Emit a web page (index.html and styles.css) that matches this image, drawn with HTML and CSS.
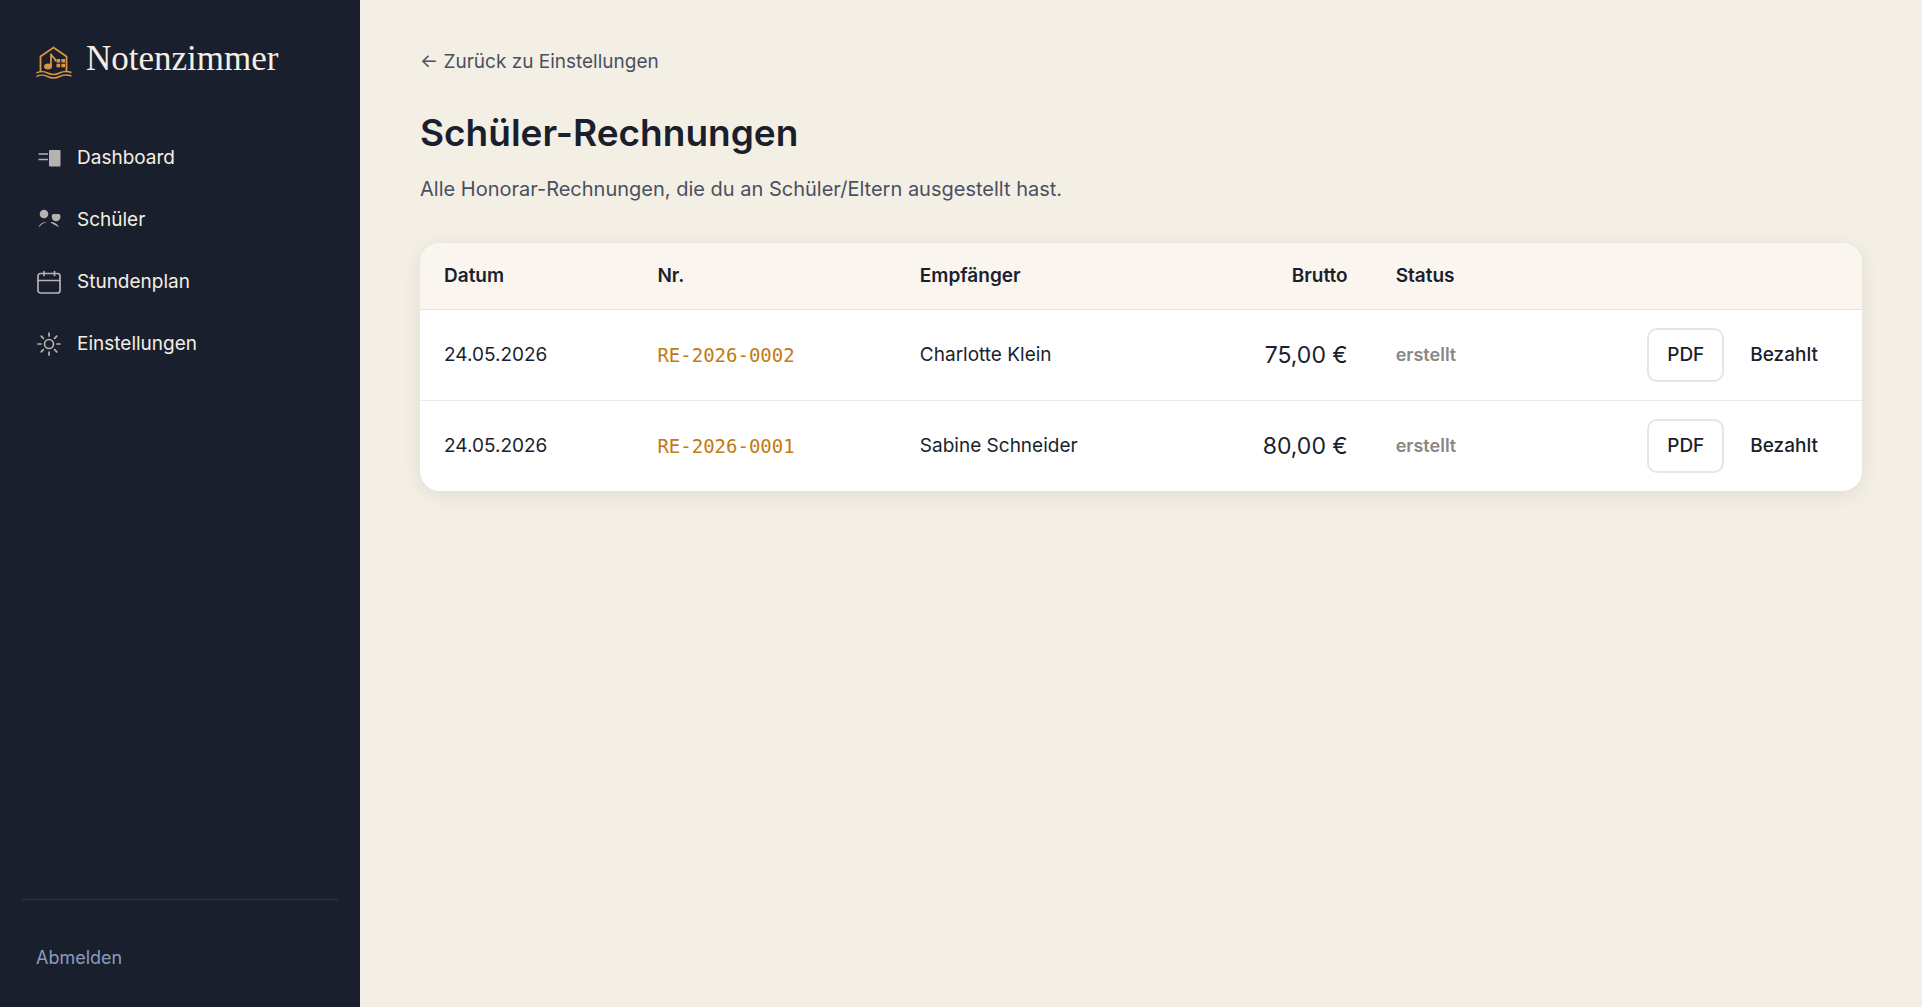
FILE: index.html
```html
<!DOCTYPE html>
<html lang="de">
  <head>
    <meta charset="UTF-8" />
    <meta name="viewport" content="width=device-width, initial-scale=1.0" />
    <title>Schüler-Rechnungen – Notenzimmer</title>
    <link rel="stylesheet" href="styles.css">
  </head>
  <body>
    <div class="app">
      <aside class="sidebar">
        <a class="brand" href="#">
          <svg class="brand-logo" viewBox="0 0 36 36" fill="none" stroke="currentColor" stroke-width="1.8">
            <path d="M4.5 28V12.5L17.5 3.5l13 9V28" />
            <path d="M.5 29c4-2 7-2 11 0s8 2 12 0 8-2 12-.5" stroke-width="1.4" />
            <path d="M.5 32.5c4-2 7-2 11 0s8 2 12 0 8-2 12-.5" stroke-width="1.4" />
            <path d="M15 22.5V9.500c0 4 4.500 3 4.500 8" />
            <ellipse cx="12" cy="22.5" rx="4" ry="3" fill="currentColor" stroke="none" />
            <path d="M20.5 15h3.7v3.5h-3.7zM25.4 15H29v3.5h-3.6zM20.5 19.7h3.7v3.5h-3.7zM25.4 19.7H29v3.5h-3.6z" fill="currentColor" stroke="none" />
          </svg>
          <span class="brand-name">Notenzimmer</span>
        </a>
        <nav class="nav">
          <a class="nav-link" href="#">
            <svg class="icon" viewBox="0 0 24 24" fill="none" stroke="currentColor" stroke-width="1.3">
              <path d="M1.5 8H11M1.5 13.5H11" />
              <rect x="12" y="4" width="11.5" height="16.5" rx="1" fill="currentColor" stroke="none" />
            </svg>
            Dashboard
          </a>
          <a class="nav-link" href="#">
            <svg class="icon" viewBox="0 0 24 24" fill="currentColor">
              <circle cx="7" cy="6" r="4.3" />
              <path d="M14.7 8.5c0-3 2.5-2.8 4.300-2.300 1.800-.5 4.500-.7 4.500 2.300 0 3-2 4.800-4.400 4.800s-4.400-1.800-4.400-4.800z" />
              <path d="M1.5 19.5c.5-3 4-5.800 8.500-5.500-3.500 1-6 2.500-8.500 5.500zM22 19.5c-1-3-4-5.500-8.500-5.500 1 2 5 2.500 8.500 5.500z" />
            </svg>
            Schüler
          </a>
          <a class="nav-link" href="#">
            <svg class="icon" viewBox="0 0 24 24" fill="none" stroke="currentColor" stroke-width="1.7" stroke-linecap="round">
              <rect x="1" y="3.5" width="22" height="19.5" rx="2.5" />
              <path d="M1 10.5h22M7 1.5v4M17.5 1.5v4" />
            </svg>
            Stundenplan
          </a>
          <a class="nav-link" href="#">
            <svg class="icon" viewBox="0 0 24 24" fill="none" stroke="currentColor" stroke-width="1.7" stroke-linecap="round">
              <circle cx="12" cy="12" r="4.5" />
              <path d="M12 1v3M12 20v3M1 12h3M20 12h3M4.2 4.2l2.2 2.2M17.6 17.6l2.2 2.2M4.2 19.8l2.2-2.2M17.6 6.4l2.2-2.2" />
            </svg>
            Einstellungen
          </a>
        </nav>
        <div class="sidebar-footer">
          <button class="logout" type="button">Abmelden</button>
        </div>
      </aside>

      <main class="content">
        <a class="back" href="#">← Zurück zu Einstellungen</a>
        <h1>Schüler-Rechnungen</h1>
        <p class="lead">Alle Honorar-Rechnungen, die du an Schüler/Eltern ausgestellt hast.</p>

        <div class="card">
          <table class="invoices">
            <thead>
              <tr>
                <th class="col-date">Datum</th>
                <th class="col-number">Nr.</th>
                <th class="col-name">Empfänger</th>
                <th class="col-amount">Brutto</th>
                <th class="col-status">Status</th>
                <th></th>
              </tr>
            </thead>
            <tbody>
              <tr>
                <td>24.05.2026</td>
                <td class="number">RE-2026-0002</td>
                <td>Charlotte Klein</td>
                <td class="amount">75,00 €</td>
                <td class="status">erstellt</td>
                <td>
                  <div class="actions">
                    <button class="btn btn-outline" type="button">PDF</button>
                    <button class="btn" type="button">Bezahlt</button>
                  </div>
                </td>
              </tr>
              <tr>
                <td>24.05.2026</td>
                <td class="number">RE-2026-0001</td>
                <td>Sabine Schneider</td>
                <td class="amount">80,00 €</td>
                <td class="status">erstellt</td>
                <td>
                  <div class="actions">
                    <button class="btn btn-outline" type="button">PDF</button>
                    <button class="btn" type="button">Bezahlt</button>
                  </div>
                </td>
              </tr>
            </tbody>
          </table>
        </div>
      </main>
    </div>
  </body>
</html>
```

FILE: styles.css
```css
* {
  box-sizing: border-box;
}
body {
  margin: 0;
  background: #f3efe4;
  color: #1a1f2e;
  font-family: Inter, "Liberation Sans", sans-serif;
  font-size: 19px;
  line-height: 32px;
}
a {
  color: inherit;
  text-decoration: none;
}
button {
  font: inherit;
  color: inherit;
  background: none;
  border: none;
  cursor: pointer;
}

.app {
  display: flex;
  min-height: 100vh;
}

/* sidebar */
.sidebar {
  flex: 0 0 360px;
  display: flex;
  flex-direction: column;
  padding: 37px 22px 21px;
  background: #1a1f2e;
  color: #f3efe4;
}
.brand {
  display: flex;
  align-items: center;
  gap: 14px;
  padding: 0 14px;
}
.brand-logo {
  width: 36px;
  height: 36px;
  margin-top: 6px;
  color: #d9953f;
}
.brand-name {
  font-family: "Liberation Serif", serif;
  font-size: 35px;
  line-height: 44px;
}
.nav {
  display: flex;
  flex-direction: column;
  gap: 4px;
  margin-top: 48px;
}
.nav-link {
  display: flex;
  align-items: center;
  gap: 16px;
  height: 58px;
  padding: 0 15px;
}
.icon {
  width: 24px;
  height: 24px;
  color: #b5b2b0;
}
.sidebar-footer {
  margin-top: auto;
  padding-top: 30px;
  border-top: 1px solid #313543;
}
.logout {
  padding: 12px 14px;
  color: #8a9bbd;
  font-size: 18px;
}

/* page */
.content {
  flex: 1;
  min-width: 0;
  padding: 46px 60px;
}
.back,
.lead {
  color: #4a5060;
}
h1 {
  margin: 31px 0 16px;
  font-size: 37px;
  font-weight: 600;
  line-height: 48px;
}
.lead {
  margin: 0 0 38px;
  font-size: 20px;
}

.card {
  background: #fff;
  border-radius: 20px;
  overflow: hidden;
  box-shadow: 0 4px 20px rgba(26, 31, 46, 0.08);
}
.invoices {
  width: 100%;
  border-collapse: collapse;
  table-layout: fixed;
}
.invoices th,
.invoices td {
  padding: 18px 24px;
  text-align: left;
}
.invoices th {
  padding: 17px 24px;
  background: #faf5ef;
  border-bottom: 1px solid #e6e2dd;
  font-weight: 600;
}
.invoices tbody tr + tr td {
  border-top: 1px solid #ebebeb;
}
.col-date {
  width: 14.8%;
}
.col-number {
  width: 18.2%;
}
.col-name {
  width: 20%;
}
.col-amount {
  width: 13%;
}
.col-status {
  width: 12%;
}
.number {
  color: #c47a12;
  font-family: "DejaVu Sans Mono", monospace;
}
.invoices .col-amount,
.invoices .amount {
  text-align: right;
}
.amount {
  font-size: 23px;
}
.status {
  color: #888;
  font-size: 18px;
  font-weight: 600;
}
.actions {
  display: flex;
  justify-content: flex-end;
  gap: 6px;
}
.btn {
  height: 54px;
  padding: 0 18px;
  border: 2px solid transparent;
  border-radius: 10px;
  font-weight: 500;
}
.btn-outline {
  border-color: #e6e6e6;
}
```
